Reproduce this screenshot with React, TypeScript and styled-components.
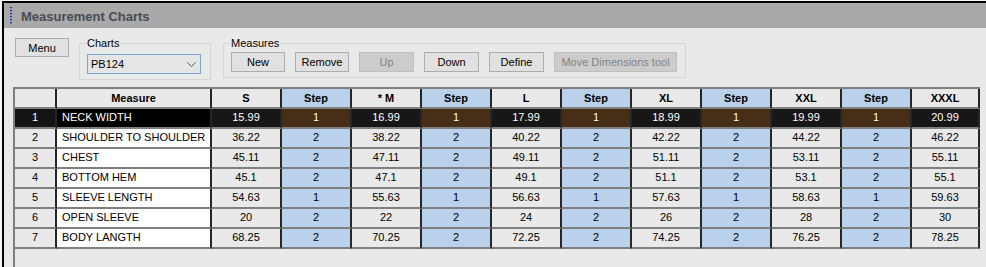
import React from 'react';
import styled, { createGlobalStyle } from 'styled-components';

const GlobalStyle = createGlobalStyle`
  html, body {
    margin: 0;
    padding: 0;
    background: #f4f4f4;
    overflow: hidden;
    font-family: 'Liberation Sans', Arial, sans-serif;
  }
`;

const colors = {
  window: '#e9e9e9',
  title: '#a9a9a9',
  step: '#b9d1ea',
  selStep: '#472e16',
  selCell: '#161616',
  gridLine: '#7f7f7f',
  colLine: '#262626',
};

const Frame = styled.div`
  margin: 1px 0 0 2px;
  height: 100vh;
  border-top: 2px solid #000;
  border-left: 2px solid #000;
  background: ${colors.window};
  display: flex;
  flex-direction: column;
`;

const TitleBar = styled.div`
  height: 25px;
  flex: none;
  background: ${colors.title};
  display: flex;
  align-items: center;
  padding-left: 6px;
  gap: 9px;
`;

const Grip = styled.span`
  width: 2px;
  height: 18px;
  background: repeating-linear-gradient(
    to bottom,
    #23348e 0 1px,
    #6f7fbf 1px 2px,
    transparent 2px 3px
  );
`;

const Title = styled.span`
  font-size: 13px;
  font-weight: bold;
  color: #474c54;
  margin-top: 1px;
`;

const Toolbar = styled.div`
  display: flex;
  align-items: flex-start;
  padding: 10px 0 0 11px;
  flex: none;
`;

const Button = styled.button<{ w?: number; disabled?: boolean }>`
  width: ${(p) => p.w ?? 54}px;
  height: 20px;
  padding: 0;
  margin: 0;
  box-sizing: border-box;
  font-family: 'Liberation Sans', Arial, sans-serif;
  font-size: 11px;
  color: ${(p) => (p.disabled ? '#838383' : '#000')};
  background: ${(p) => (p.disabled ? '#cccccc' : '#e1e1e1')};
  border: 1px solid ${(p) => (p.disabled ? '#bfbfbf' : '#adadad')};
`;

const MenuButton = styled(Button)`
  height: 19px;
`;

const Group = styled.fieldset<{ w: number; gap: number }>`
  box-sizing: border-box;
  width: ${(p) => p.w}px;
  margin: -1px 0 0 ${(p) => p.gap}px;
  padding: 2px 8px 5px 7px;
  border: 1px solid #d5d5d5;
  display: flex;
  gap: 10px;
`;

const Legend = styled.legend`
  font-size: 11px;
  line-height: 13px;
  padding: 0 1px;
  margin-left: -1px;
  color: #000;
`;

const Combo = styled.div`
  box-sizing: border-box;
  width: 114px;
  height: 20px;
  margin-top: 2px;
  border: 1px solid #7aa7d6;
  background: #e5e5e5;
  display: flex;
  align-items: center;
  justify-content: space-between;
  padding: 0 4px 0 3px;
  font-size: 11px;
`;

const GridBox = styled.div`
  margin: 7px 0 0 9px;
  width: 967px;
  flex: 1;
  box-sizing: border-box;
  border-top: 2px solid ${colors.gridLine};
  border-left: 2px solid ${colors.gridLine};
`;

const Grid = styled.div`
  display: grid;
  grid-template-columns: 42px 155px repeat(10, 70px) 68px;
  grid-auto-rows: 20px;
`;

type Kind = 'num' | 'name' | 'size' | 'step';

const bg = (kind: Kind, header: boolean, selected: boolean) => {
  if (kind === 'step') return selected ? colors.selStep : colors.step;
  if (header) return colors.window;
  if (kind === 'name') return selected ? '#000' : '#fff';
  return selected ? colors.selCell : colors.window;
};

const Cell = styled.div<{ kind: Kind; header?: boolean; selected?: boolean }>`
  box-sizing: border-box;
  border-right: 2px solid ${colors.colLine};
  border-bottom: 2px solid ${colors.gridLine};
  background: ${(p) => bg(p.kind, !!p.header, !!p.selected)};
  color: ${(p) => (p.selected ? '#fff' : '#000')};
  font-size: 11px;
  font-weight: ${(p) => (p.header ? 'bold' : 'normal')};
  display: flex;
  align-items: center;
  justify-content: ${(p) => (p.kind === 'name' && !p.header ? 'flex-start' : 'center')};
  padding: ${(p) => (p.header ? '0' : '0 0 3px')};
  padding-left: ${(p) => (p.kind === 'name' && !p.header ? '5px' : '0')};
  white-space: nowrap;
  overflow: hidden;
`;

const headers = ['', 'Measure', 'S', 'Step', '* M', 'Step', 'L', 'Step', 'XL', 'Step', 'XXL', 'Step', 'XXXL'];

const rows: [string, number[]][] = [
  ['NECK WIDTH', [15.99, 1, 16.99, 1, 17.99, 1, 18.99, 1, 19.99, 1, 20.99]],
  ['SHOULDER TO SHOULDER', [36.22, 2, 38.22, 2, 40.22, 2, 42.22, 2, 44.22, 2, 46.22]],
  ['CHEST', [45.11, 2, 47.11, 2, 49.11, 2, 51.11, 2, 53.11, 2, 55.11]],
  ['BOTTOM HEM', [45.1, 2, 47.1, 2, 49.1, 2, 51.1, 2, 53.1, 2, 55.1]],
  ['SLEEVE LENGTH', [54.63, 1, 55.63, 1, 56.63, 1, 57.63, 1, 58.63, 1, 59.63]],
  ['OPEN SLEEVE', [20, 2, 22, 2, 24, 2, 26, 2, 28, 2, 30]],
  ['BODY LANGTH', [68.25, 2, 70.25, 2, 72.25, 2, 74.25, 2, 76.25, 2, 78.25]],
];

const kindOf = (i: number): Kind => (i === 0 ? 'num' : i === 1 ? 'name' : i % 2 === 1 ? 'step' : 'size');

const Chevron = () => (
  <svg width="9" height="5" viewBox="0 0 9 5">
    <path d="M0.5 0.5 L4.5 4.5 L8.5 0.5" fill="none" stroke="#555" strokeWidth="1" />
  </svg>
);

export default function App() {
  return (
    <>
      <GlobalStyle />
      <Frame>
        <TitleBar>
          <Grip />
          <Title>Measurement Charts</Title>
        </TitleBar>
        <Toolbar>
          <MenuButton>Menu</MenuButton>
          <Group w={132} gap={10}>
            <Legend>Charts</Legend>
            <Combo>
              <span>PB124</span>
              <Chevron />
            </Combo>
          </Group>
          <Group w={462} gap={12}>
            <Legend>Measures</Legend>
            <Button>New</Button>
            <Button>Remove</Button>
            <Button w={55} disabled>Up</Button>
            <Button w={55}>Down</Button>
            <Button w={55}>Define</Button>
            <Button w={123} disabled>Move Dimensions tool</Button>
          </Group>
        </Toolbar>
        <GridBox>
          <Grid>
            {headers.map((h, i) => (
              <Cell key={'h' + i} kind={kindOf(i)} header>
                {h}
              </Cell>
            ))}
            {rows.map(([name, vals], r) => {
              const sel = r === 0;
              return (
                <React.Fragment key={name}>
                  <Cell kind="num" selected={sel} style={sel ? { background: '#141414' } : undefined}>
                    {r + 1}
                  </Cell>
                  <Cell kind="name" selected={sel}>{name}</Cell>
                  {vals.map((v, i) => (
                    <Cell key={i} kind={kindOf(i + 2)} selected={sel}>
                      {v}
                    </Cell>
                  ))}
                </React.Fragment>
              );
            })}
          </Grid>
        </GridBox>
      </Frame>
    </>
  );
}
